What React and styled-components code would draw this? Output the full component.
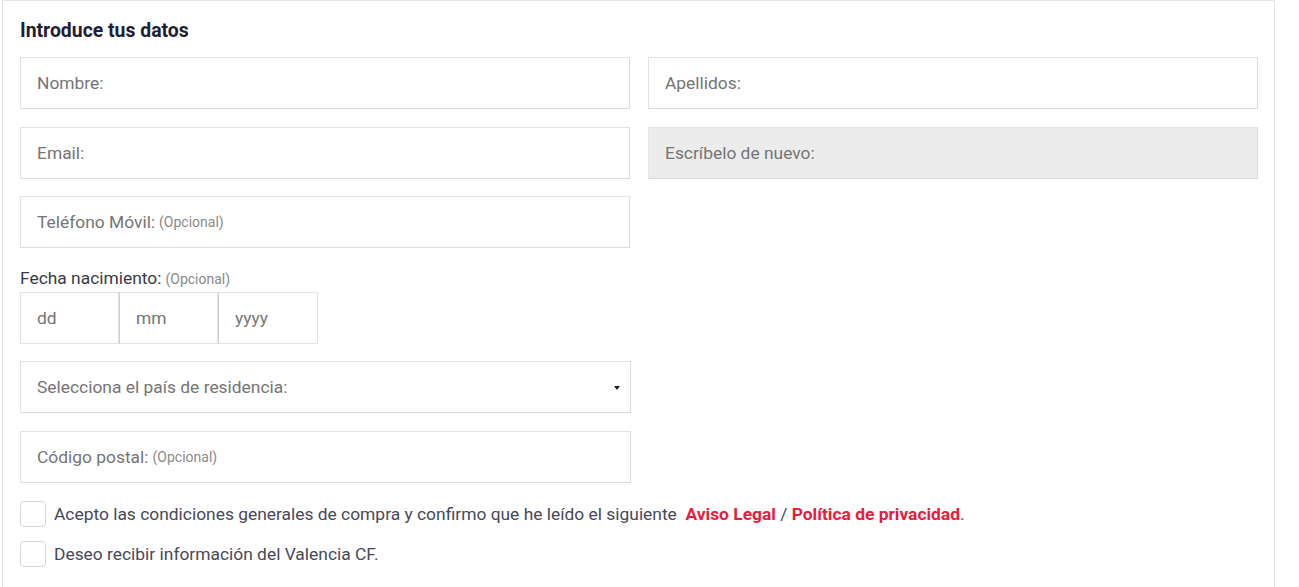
import React from "react";
import styled, { createGlobalStyle } from "styled-components";

const Global = createGlobalStyle`
  html, body { margin: 0; padding: 0; background: #fff; }
  body { font-family: Roboto, "Liberation Sans", Arial, sans-serif; }
  * { box-sizing: border-box; }
`;

const Panel = styled.section`
  margin-left: 2px;
  width: 1273px;
  min-height: 600px;
  border: 1px solid #e6e6e6;
  border-bottom: none;
  background: #fff;
  padding: 19px 16px 0 17px;
`;

const Heading = styled.h2`
  margin: 0 0 15px;
  font-size: 19.4px;
  line-height: 22px;
  font-weight: 700;
  color: #1f1e33;
`;

const Grid = styled.div`
  display: grid;
  grid-template-columns: 610px 610px;
  column-gap: 18px;
  row-gap: 17.5px;
`;

const Field = styled.div`
  height: 52px;
  border: 1px solid #e3e3e3;
  border-bottom-color: #dcdcdc;
  border-right-color: #dcdcdc;
  background: ${(p) => (p.$disabled ? "#ececec" : "#fff")};
  display: flex;
  align-items: center;
  padding: 0 16px;
  font-size: 17.4px;
  color: #757575;
  position: relative;
`;

const Optional = styled.span`
  font-size: 14px;
  color: #8a8a8a;
  margin-left: 4px;
`;

const Label = styled.div`
  margin-top: 19px;
  font-size: 17.4px;
  line-height: 22px;
  color: #3a3a44;
`;

const DateRow = styled.div`
  display: flex;
  margin-top: 2px;
`;

const DateBox = styled.div`
  width: ${(p) => p.$w}px;
  height: 52px;
  border: 1px solid #e3e3e3;
  border-left: ${(p) => (p.$first ? "1px solid #e3e3e3" : "1px solid #cfcfcf")};
  display: flex;
  align-items: center;
  padding-left: 16px;
  font-size: 17.4px;
  color: #757575;
`;

const Stack = styled.div`
  display: flex;
  flex-direction: column;
  gap: 18px;
  margin-top: 17px;
  width: 611px;
`;

const Caret = styled.span`
  position: absolute;
  right: 10px;
  top: 50%;
  margin-top: -1px;
  width: 0;
  height: 0;
  border-left: 3px solid transparent;
  border-right: 3px solid transparent;
  border-top: 4px solid #222;
`;

const Checks = styled.div`
  display: flex;
  flex-direction: column;
  gap: 14px;
  margin-top: 18px;
`;

const CheckRow = styled.label`
  display: flex;
  align-items: center;
  gap: 8px;
  font-size: 17.4px;
  color: #484858;
  line-height: 26px;
`;

const Box = styled.span`
  width: 26px;
  height: 26px;
  border: 1px solid #d6d6d6;
  border-radius: 4px;
  background: #fff;
  flex: none;
`;

const Link = styled.a`
  color: #ea1a3c;
  font-weight: 700;
  text-decoration: none;
`;

export default function App() {
  return (
    <>
      <Global />
      <Panel>
        <Heading>Introduce tus datos</Heading>
        <Grid>
          <Field>Nombre:</Field>
          <Field>Apellidos:</Field>
          <Field>Email:</Field>
          <Field $disabled>Escríbelo de nuevo:</Field>
          <Field>
            Teléfono Móvil:<Optional>(Opcional)</Optional>
          </Field>
        </Grid>
        <Label>
          Fecha nacimiento:<Optional>(Opcional)</Optional>
        </Label>
        <DateRow>
          <DateBox $w={99} $first>dd</DateBox>
          <DateBox $w={99}>mm</DateBox>
          <DateBox $w={100}>yyyy</DateBox>
        </DateRow>
        <Stack>
          <Field>
            Selecciona el país de residencia:
            <Caret />
          </Field>
          <Field>
            Código postal:<Optional>(Opcional)</Optional>
          </Field>
        </Stack>
        <Checks>
          <CheckRow>
            <Box />
            <span>
              Acepto las condiciones generales de compra y confirmo que he leído el siguiente&nbsp;{" "}
              <Link>Aviso Legal</Link> / <Link>Política de privacidad</Link>.
            </span>
          </CheckRow>
          <CheckRow>
            <Box />
            <span>Deseo recibir información del Valencia CF.</span>
          </CheckRow>
        </Checks>
      </Panel>
    </>
  );
}
